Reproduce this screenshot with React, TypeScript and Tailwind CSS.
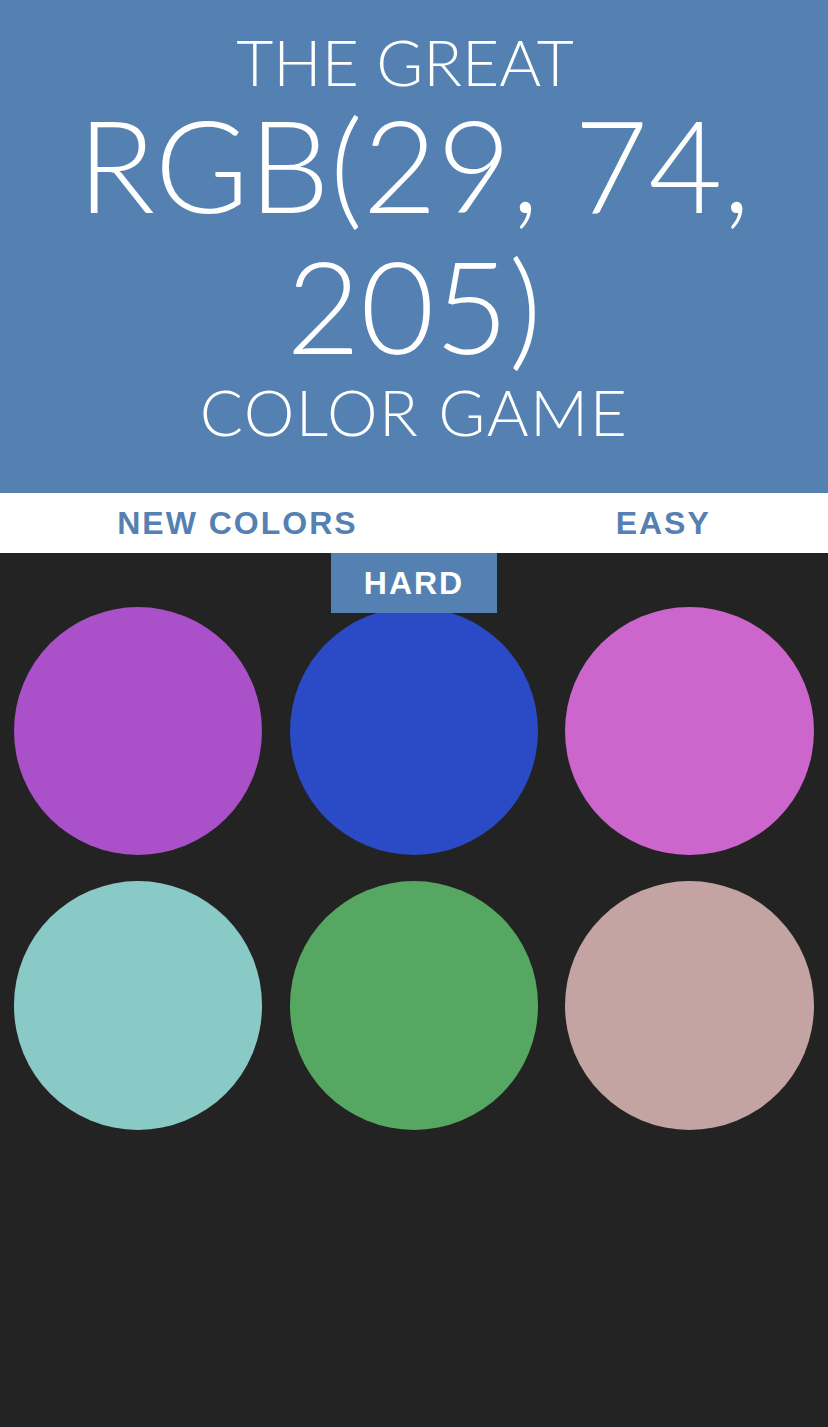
import React from "react";

const colors = ["#aa50c8", "#2b4ac6", "#cc66cc", "#89cac7", "#55a761", "#c4a4a3"];

export default function App() {
  return (
    <div className="min-h-[1427px] bg-[#232323]">
      <h1
        className="m-0 bg-[#5481b2] pt-[31px] pb-[44px] text-center font-light uppercase text-white"
        style={{ fontFamily: "Lato, 'Noto Sans', sans-serif" }}
      >
        <div className="pr-[18px] text-[64px] leading-[62px]">The Great</div>
        <div className="text-[128px] leading-[141px]">RGB(29, 74, 205)</div>
        <div className="text-[64px] leading-[74px] tracking-[1.5px]">Color Game</div>
      </h1>
      <div
        className="relative z-10 flex h-[60px] flex-wrap justify-center bg-white text-[32px] font-bold uppercase tracking-[2px] text-[#5481b2]"
        style={{ fontFamily: "'Liberation Sans', Arial, sans-serif" }}
      >
        <button className="h-[60px] px-[33px] uppercase">New Colors</button>
        <span className="w-[192px]" />
        <button className="h-[60px] px-[33px] uppercase">Easy</button>
        <div className="h-0 basis-full" />
        <button className="h-[60px] bg-[#5481b2] px-[33px] uppercase text-white">Hard</button>
      </div>
      <div className="mx-auto mt-[41px] flex flex-wrap">
        {colors.map((c, i) => (
          <div key={i} className="mx-[1.66%] my-[13px] aspect-square w-[30%] rounded-full" style={{ backgroundColor: c }} />
        ))}
      </div>
    </div>
  );
}
